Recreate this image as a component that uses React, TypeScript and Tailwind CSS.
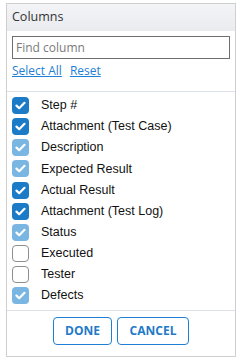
import { useState } from 'react';

type Col = { label: string; checked: boolean; locked?: boolean };

const initialCols: Col[] = [
  { label: 'Step #', checked: true },
  { label: 'Attachment (Test Case)', checked: true },
  { label: 'Description', checked: true, locked: true },
  { label: 'Expected Result', checked: true, locked: true },
  { label: 'Actual Result', checked: true },
  { label: 'Attachment (Test Log)', checked: true },
  { label: 'Status', checked: true, locked: true },
  { label: 'Executed', checked: false },
  { label: 'Tester', checked: false },
  { label: 'Defects', checked: true, locked: true },
];

function Check({ checked, locked }: { checked: boolean; locked?: boolean }) {
  if (!checked) {
    return <span className="w-[17px] h-[17px] rounded-[4px] border border-[#8e8e8e] bg-white shrink-0" />;
  }
  return (
    <span
      className={`w-[17px] h-[17px] rounded-[4px] flex items-center justify-center shrink-0 ${
        locked ? 'bg-[#7ab6e2]' : 'bg-[#1b7bc6]'
      }`}
    >
      <svg width="11" height="9" viewBox="0 0 11 9">
        <path d="M1.5 4.6 L4.2 7.2 L9.5 1.8" fill="none" stroke="#fff" strokeWidth="2.2" strokeLinecap="round" strokeLinejoin="round" />
      </svg>
    </span>
  );
}

export default function App() {
  const [cols, setCols] = useState(initialCols);
  const [query, setQuery] = useState('');

  const toggle = (i: number) => {
    if (cols[i].locked) return;
    setCols(cols.map((c, j) => (j === i ? { ...c, checked: !c.checked } : c)));
  };

  return (
    <div className="w-[240px] h-[363px] bg-white pt-[3px] pl-[6px]">
      <div className="w-[230px] h-[354px] border border-[#cfcfcf] bg-white flex flex-col font-['Open_Sans',sans-serif]">
        {/* Header */}
        <div className="h-[27px] shrink-0 bg-gradient-to-b from-[#f3f4f6] to-[#e9ebef] flex items-center pl-[5px] text-[12.5px] text-[#333]">
          Columns
        </div>

        {/* Search + links */}
        <div className="px-[5px] pt-[5px] shrink-0">
          <input
            value={query}
            onChange={(e) => setQuery(e.target.value)}
            placeholder="Find column"
            className="block w-[218px] h-[23px] border border-[#6f6f6f] px-[3px] text-[12px] text-[#333] placeholder:text-[#7a7a7a] outline-none"
          />
          <div className="flex gap-[8px] mt-[2px] h-[30px] items-start text-[12px] text-[#1f7fd4] leading-[20px]">
            <button type="button" className="underline cursor-pointer" onClick={() => setCols(cols.map((c) => ({ ...c, checked: true })))}>
              Select All
            </button>
            <button type="button" className="underline cursor-pointer" onClick={() => setCols(initialCols)}>
              Reset
            </button>
          </div>
        </div>

        {/* List */}
        <div className="border-t border-[#dde1e8] pt-[3px] h-[219px] shrink-0 font-['Liberation_Sans',Arial,sans-serif]">
          {cols
            .filter((c) => c.label.toLowerCase().includes(query.toLowerCase()))
            .map((c) => {
              const i = cols.indexOf(c);
              return (
                <div
                  key={c.label}
                  onClick={() => toggle(i)}
                  className="h-[21.15px] flex items-center pl-[5px] gap-[12px] text-[12.5px] text-[#111] cursor-pointer"
                >
                  <Check checked={c.checked} locked={c.locked} />
                  <span>{c.label}</span>
                </div>
              );
            })}
        </div>

        {/* Footer */}
        <div className="border-t border-[#dde1e8] flex justify-center gap-[5px] pt-[6px]">
          <button
            type="button"
            className="w-[59px] h-[28px] border border-[#1f7fd4] rounded-[4px] text-[12px] font-bold text-[#1f7ac7] cursor-pointer"
          >
            DONE
          </button>
          <button
            type="button"
            className="w-[72px] h-[28px] border border-[#1f7fd4] rounded-[4px] text-[12px] font-bold text-[#1f7ac7] cursor-pointer"
          >
            CANCEL
          </button>
        </div>
      </div>
    </div>
  );
}
